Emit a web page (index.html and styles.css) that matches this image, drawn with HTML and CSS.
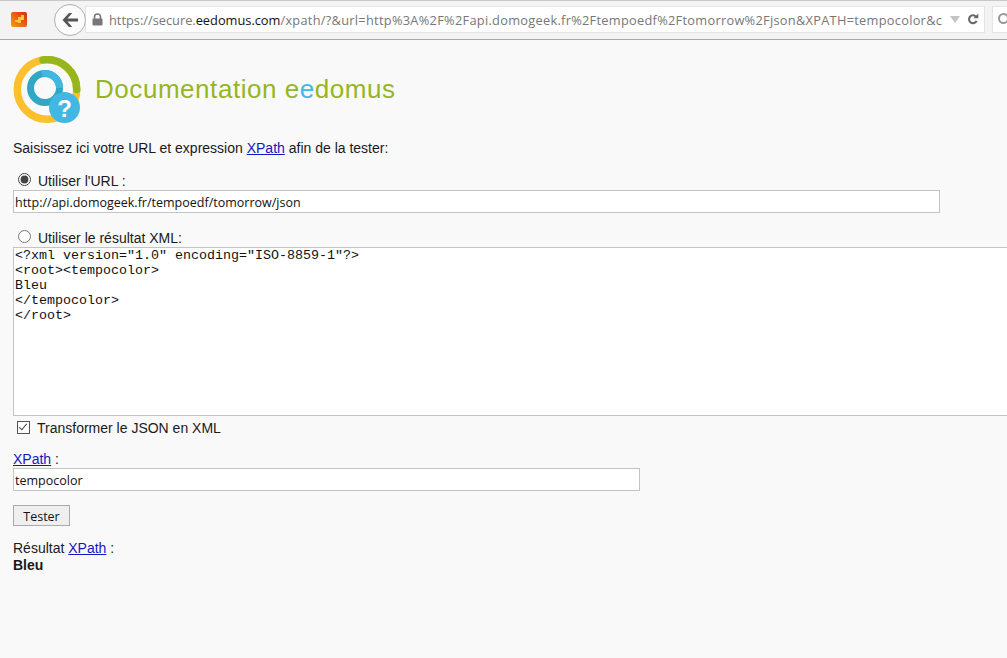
FILE: index.html
```html
<!DOCTYPE html>
<html lang="fr">
<head>
<meta charset="utf-8">
<title>Documentation eedomus</title>
<link rel="stylesheet" href="styles.css">
</head>
<body>
<header class="chrome">
  <svg class="favicon" width="16" height="15" viewBox="0 0 16 15"><defs><linearGradient id="fav" x1="0" y1="1" x2="1" y2="0"><stop offset="0" stop-color="#f2a018"/><stop offset=".55" stop-color="#ea5a12"/><stop offset="1" stop-color="#d62c12"/></linearGradient></defs><rect x="0" y="0" width="16" height="15" rx="2" fill="url(#fav)"/><path d="M4 8h3V5h3V3h3v5h-3v3H7v-1H4z" fill="#ffc83a"/></svg>
  <div class="back"><svg width="18" height="16" viewBox="0 0 18 16"><path d="M8 1L1.500 8 8 15h3.200L6.500 9.600H17V6.400H6.500L11.200 1z" fill="#555"/></svg></div>
  <div class="urlbar">
    <svg class="lock" width="11" height="13" viewBox="0 0 11 13"><path d="M2.500 6V4a3 3 0 0 1 6 0v2" fill="none" stroke="#777" stroke-width="1.600"/><rect x="0.500" y="5.500" width="10" height="7" rx="1" fill="#777"/></svg>
    <span class="url">https://secure.<b>eedomus.com</b><span class="url-tail">/xpath/?&amp;url=http%3A%2F%2Fapi.domogeek.fr%2Ftempoedf%2Ftomorrow%2Fjson&amp;XPATH=tempocolor&amp;c</span></span>
    <span class="drop"></span>
    <svg class="reload" width="12" height="13" viewBox="0 0 14 14"><path d="M11.200 8.600A4.600 4.600 0 1 1 10.400 3.600" fill="none" stroke="#666" stroke-width="2.400"/><path d="M7.600 5.600h5.600V0z" fill="#666"/></svg>
  </div>
  <div class="search"><span class="search-glyph"></span></div>
</header>

<main class="page">
  <div class="brand">
    <svg class="logo" width="68" height="68" viewBox="0 0 68 68">
      <circle cx="34" cy="33.500" r="29.700" fill="none" stroke="#fcc02e" stroke-width="7.500"/>
      <path d="M30 3.900A29.700 29.700 0 0 1 63.700 33.500" fill="none" stroke="#96b61f" stroke-width="7.500" stroke-linecap="round"/>
      <circle cx="32" cy="32" r="14.500" fill="none" stroke="#2fa7c5" stroke-width="7"/>
      <path d="M29 17.800A14.500 14.500 0 0 1 46.500 32" fill="none" stroke="#40b8e2" stroke-width="7"/>
      <circle cx="51.500" cy="51.500" r="15.500" fill="#40b8e2"/>
      <text x="51.500" y="61" class="logo-q">?</text>
    </svg>
    <h1 class="title">Documentation e<span class="blue">e</span>domus</h1>
  </div>

  <p class="intro">Saisissez ici votre URL et expression <a href="#">XPath</a> afin de la tester:</p>

  <form class="form">
    <label class="option first"><input class="radio" type="radio" name="src" checked>Utiliser l'URL :</label>
    <input class="field url-field" type="text" value="http://api.domogeek.fr/tempoedf/tomorrow/json">

    <label class="option second"><input class="radio" type="radio" name="src">Utiliser le résultat XML:</label>
    <textarea class="xml" spellcheck="false"><?xml version="1.0" encoding="ISO-8859-1"?>
<root><tempocolor>
Bleu
</tempocolor>
</root></textarea>

    <label class="check"><input class="checkbox" type="checkbox" checked>Transformer le JSON en XML</label>

    <div class="xpath-label"><a href="#">XPath</a> :</div>
    <input class="field xpath-field" type="text" value="tempocolor">

    <button class="submit" type="button">Tester</button>

    <div class="result-label">Résultat <a href="#">XPath</a> :</div>
    <div class="result">Bleu</div>
  </form>
</main>
</body>
</html>
```
FILE: styles.css
```css
html, body { margin: 0; padding: 0; height: 100%; overflow: hidden; }
body { background: #f9f9f9; color: #1a1a1a; font-family: "Liberation Sans", Arial, sans-serif; font-size: 14px; width: 1007px; height: 658px; }
a { color: #1515c4; }

.chrome { box-sizing: border-box; height: 40px; display: flex; align-items: flex-start; background: #f3f3f3; border-top: 1px solid #c8c8c8; border-bottom: 1px solid #a8a8a8; padding-left: 11px; }
.favicon { margin-top: 11px; flex: none; }
.back { box-sizing: border-box; flex: none; width: 32px; height: 32px; margin: 3px 0 0 27px; border: 1px solid #b0b0b0; border-radius: 50%; background: #fbfbfb; display: flex; align-items: center; justify-content: center; position: relative; z-index: 1; }
.urlbar { flex: none; box-sizing: border-box; width: 900px; height: 27px; margin: 5px 0 0 -1px; background: #fff; border: 1px solid #e4e4e4; display: flex; align-items: center; padding-left: 6px; overflow: hidden; }
.lock { flex: none; margin-right: 6px; }
.url { flex: none; width: 834px; overflow: hidden; white-space: nowrap; font-family: "Open Sans", sans-serif; font-size: 12.800px; color: #777; }
.url b { font-weight: 400; color: #111; }
.url-tail { letter-spacing: .28px; }
.drop { flex: none; width: 0; height: 0; margin-left: 7px; border-left: 5px solid transparent; border-right: 5px solid transparent; border-top: 7px solid #c4c4c4; }
.reload { flex: none; margin-left: 7px; }
.search { flex: none; box-sizing: border-box; width: 60px; height: 27px; margin: 5px 0 0 7px; background: #fff; border: 1px solid #e4e4e4; padding: 6px 0 0 5px; }
.search-glyph { display: block; box-sizing: border-box; width: 11px; height: 11px; border: 2px solid #999; border-radius: 50%; }

.page { padding: 16px 0 0 13px; }
.brand { display: flex; align-items: center; height: 68px; }
.logo { flex: none; }
.logo-q { font-family: "Liberation Sans", sans-serif; font-size: 24px; font-weight: 700; fill: #fff; text-anchor: middle; }
.title { margin: -2px 0 0 14px; font-size: 26px; line-height: 30px; font-weight: 400; color: #96b61f; letter-spacing: .55px; }
.blue { color: #40b8e2; }

.intro { margin: 16px 0 0; line-height: 16px; }
.form { display: flex; flex-direction: column; align-items: flex-start; }
.option { display: flex; align-items: center; height: 16px; line-height: 16px; }
.first { margin-top: 17px; }
.second { margin-top: 17px; }
.radio { width: 13px; height: 13px; margin: -3px 6px 0 5px; accent-color: #444; }
.option .radio { margin-right: 7px; }
.field { box-sizing: border-box; height: 23px; padding: 1px 1px 0; background: #fff; border: 1px solid #c4c4c4; font-family: "Open Sans", sans-serif; font-size: 12.500px; color: #111; outline: none; }
.url-field { width: 927px; margin-top: 1px; }
.xml { box-sizing: border-box; flex: none; width: 1010px; height: 169px; margin: 1px 0 0; padding: 0 1px; background: #fff; border: 1px solid #c4c4c4; font-family: "Liberation Mono", monospace; font-size: 13.333px; line-height: 15px; color: #111; resize: none; outline: none; overflow: hidden; }
.check { display: flex; align-items: center; height: 16px; line-height: 16px; margin-top: 4px; }
.checkbox { appearance: none; box-sizing: border-box; position: relative; width: 13px; height: 13px; margin: -2px 7px 0 4px; background: #fff; border: 1px solid #555; }
.checkbox:checked::after { content: ""; position: absolute; left: 3px; top: 0; width: 4px; height: 8px; box-sizing: border-box; border: solid #444; border-width: 0 1.500px 1.500px 0; transform: rotate(40deg); }
.xpath-label { margin-top: 15px; line-height: 16px; }
.xpath-field { width: 627px; margin-top: 1px; }
.submit { box-sizing: border-box; width: 57px; height: 21px; margin-top: 14px; padding: 1px 0 0; background: #efefef; border: 1px solid #aaa; font-family: "Open Sans", sans-serif; font-size: 12.500px; color: #111; }
.result-label { margin-top: 14px; line-height: 16px; }
.result { font-weight: 700; line-height: 17px; margin-top: 1px; }
```
